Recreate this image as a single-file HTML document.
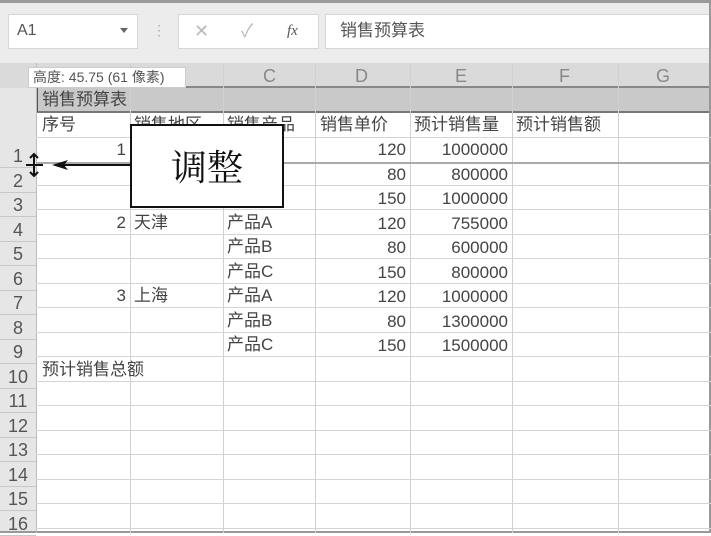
<!DOCTYPE html>
<html><head><meta charset="utf-8"><style>
*{margin:0;padding:0;box-sizing:border-box}
body{width:711px;height:533px;overflow:hidden;background:#fff;font-family:"Liberation Sans","Noto Sans CJK SC",sans-serif;position:relative;color:#444}
.a{position:absolute}
.h{position:absolute;background:#d4d4d4}
.v{position:absolute;background:#d4d4d4;width:1px}
.t{position:absolute;font-size:17px;line-height:24.5px;white-space:nowrap}
.r{text-align:right}
</style></head><body>
<div class="a" style="left:0;top:0;width:711px;height:63px;background:#ececec"></div>
<div class="a" style="left:0;top:0;width:711px;height:3px;background:#9a9a9a"></div>
<div class="a" style="left:8px;top:14px;width:130px;height:35px;background:#fff;border:1px solid #d6d6d6"></div>
<div class="t" style="left:17px;top:19px;font-size:16px;color:#555">A1</div>
<div class="a" style="left:120px;top:28px;width:0;height:0;border-left:4px solid transparent;border-right:4px solid transparent;border-top:5px solid #666"></div>
<div class="t" style="left:152px;top:18px;color:#aaa;font-size:14px">⋮</div>
<div class="a" style="left:178px;top:14px;width:141px;height:35px;background:#fff;border:1px solid #d6d6d6"></div>
<div class="t" style="left:194px;top:19px;color:#bbb;font-size:18px">✕</div>
<div class="t" style="left:241px;top:19px;color:#bbb;font-size:18px">✓</div>
<div class="t" style="left:287px;top:19px;color:#555;font-size:15px;font-style:italic;font-family:'Liberation Serif',serif">fx</div>
<div class="a" style="left:325px;top:14px;width:386px;height:35px;background:#fff;border:1px solid #d6d6d6"></div>
<div class="t" style="left:340px;top:19px;color:#555">销售预算表</div>
<div class="a" style="left:0;top:63px;width:711px;height:25px;background:#dadada"></div>
<div class="a" style="left:0;top:88px;width:36px;height:445px;background:#e6e6e6"></div>
<div class="a" style="left:36px;top:88px;width:675px;height:24px;background:#c9c9c9"></div>
<div class="a" style="left:36px;top:86px;width:675px;height:2px;background:#888"></div>
<div class="a" style="left:36px;top:111px;width:675px;height:2px;background:#777"></div>
<div class="a" style="left:36px;top:88px;width:2px;height:24px;background:#555"></div>
<div class="a" style="left:709px;top:0;width:2px;height:533px;background:#999"></div>
<div class="a" style="left:0;top:531px;width:711px;height:2px;background:#999"></div>
<div id="g"></div>
<div class="t" style="left:263px;top:64px;color:#888;font-size:18px">C</div>
<div class="t" style="left:355px;top:64px;color:#888;font-size:18px">D</div>
<div class="t" style="left:455px;top:64px;color:#888;font-size:18px">E</div>
<div class="t" style="left:559px;top:64px;color:#888;font-size:18px">F</div>
<div class="t" style="left:656px;top:64px;color:#888;font-size:18px">G</div>
<script>
var xs=[36,130,223,315,410,512,618];
var ys=[137,162,185,209,234,258,283,307,332,356,381,405,430,454,479,503,528];
var s='';
xs.forEach(function(x){s+='<div class="v" style="left:'+x+'px;top:63px;height:470px;background:'+(x==36?'#bbb':'#d0d0d0')+'"></div>';});
ys.forEach(function(y){s+='<div class="h" style="left:36px;top:'+y+'px;width:675px;height:1px"></div>';});
for(var k=1;k<=16;k++){var t=143+24.5*(k-1);s+='<div class="h" style="left:0;top:'+(t+24)+'px;width:36px;height:1px;background:#c8c8c8"></div><div class="t" style="left:0;width:36px;text-align:center;top:'+(t+1)+'px;font-size:18px;color:#555">'+k+'</div>';}
document.getElementById('g').innerHTML=s;
</script>
<div class="a" style="left:36px;top:162px;width:675px;height:2px;background:#aaa"></div>
<div class="t" style="left:42px;top:88px">销售预算表</div>
<div class="t" style="left:42px;top:113px">序号</div>
<div class="t" style="left:134px;top:113px">销售地区</div>
<div class="t" style="left:227px;top:113px">销售产品</div>
<div class="t" style="left:320px;top:113px">销售单价</div>
<div class="t" style="left:414px;top:113px">预计销售量</div>
<div class="t" style="left:516px;top:113px">预计销售额</div>
<div class="t r" style="left:36px;width:90px;top:138px">1</div>
<div class="t r" style="left:36px;width:90px;top:211px">2</div><div class="t" style="left:134px;top:211px">天津</div>
<div class="t r" style="left:36px;width:90px;top:284px">3</div><div class="t" style="left:134px;top:284px">上海</div>
<div class="t" style="left:227px;top:211px">产品A</div><div class="t" style="left:227px;top:235px">产品B</div><div class="t" style="left:227px;top:260px">产品C</div>
<div class="t" style="left:227px;top:284px">产品A</div><div class="t" style="left:227px;top:309px">产品B</div><div class="t" style="left:227px;top:333px">产品C</div>
<div class="t r" style="left:315px;width:91px;top:138px">120<br>80<br>150<br>120<br>80<br>150<br>120<br>80<br>150</div>
<div class="t r" style="left:410px;width:98px;top:138px">1000000<br>800000<br>1000000<br>755000<br>600000<br>800000<br>1000000<br>1300000<br>1500000</div>
<div class="t" style="left:42px;top:358px">预计销售总额</div>
<div class="a" style="left:28px;top:67px;width:158px;height:21px;background:#fff;border:1px solid #ccc"></div>
<div class="t" style="left:33px;top:66px;font-size:14px;line-height:22px;color:#555">高度: 45.75 (61 像素)</div>
<div class="a" style="left:130px;top:124px;width:154px;height:84px;background:#fff;border:2px solid #111"></div>
<div class="t" style="left:130px;width:154px;text-align:center;top:146px;font-size:36px;line-height:40px;color:#111;font-family:'Noto Serif CJK SC',serif">调整</div>
<svg class="a" style="left:20px;top:150px" width="112" height="30"><path d="M110 15H36" stroke="#111" stroke-width="2"/><path d="M32 15L48 10L44 15L48 20Z" fill="#111"/><path d="M14 5V25M6 15H23M10 8L14 4L18 8M10 22L14 26L18 22" stroke="#111" stroke-width="2" fill="none"/></svg>
</body></html>
